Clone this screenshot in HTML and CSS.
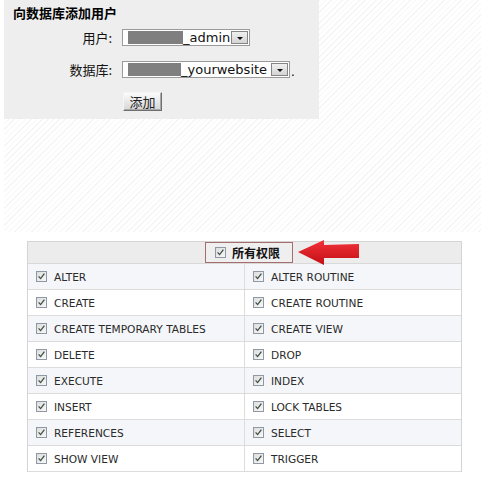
FILE: index.html
```html
<!DOCTYPE html>
<html lang="zh-CN">
<head>
<meta charset="utf-8">
<title>向数据库添加用户</title>
<link rel="stylesheet" href="styles.css">
</head>
<body>
<svg class="defs" width="0" height="0" aria-hidden="true">
  <defs>
    <linearGradient id="cbg" x1="0" y1="0" x2="1" y2="1">
      <stop offset="0" stop-color="#dcdcdc"/>
      <stop offset="1" stop-color="#f9f9f9"/>
    </linearGradient>
    <symbol id="cb" viewBox="0 0 11 11">
      <rect x="0.5" y="0.5" width="10" height="10" fill="url(#cbg)" stroke="#8e99a4"/>
      <path d="M2.6 5.4 L4.6 7.6 L8.4 2.6" fill="none" stroke="#3f4f45" stroke-width="1.3"/>
    </symbol>
    <linearGradient id="arr" x1="0" y1="0" x2="0" y2="1">
      <stop offset="0" stop-color="#f2333b"/>
      <stop offset="1" stop-color="#c30d14"/>
    </linearGradient>
  </defs>
</svg>

<div class="top">
  <div class="panel">
    <div class="title">向数据库添加用户</div>
    <div class="row row-user">
      <span class="label">用户:</span>
      <div class="select sel-user">
        <span class="redact redact-user"></span>
        <span class="val">_admin</span>
        <span class="drop"><span class="tri"></span></span>
      </div>
    </div>
    <div class="row row-db">
      <span class="label">数据库:</span>
      <div class="select sel-db">
        <span class="redact redact-db"></span>
        <span class="val">_yourwebsite</span>
        <span class="drop"><span class="tri"></span></span>
      </div>
      <span class="dot">.</span>
    </div>
    <div class="row row-btn">
      <button class="btn" type="button">添加</button>
    </div>
  </div>
</div>

<div class="perm">
  <div class="head">
    <span class="all"><svg class="cb"><use href="#cb"/></svg><b>所有权限</b></span>
  </div>
  <svg class="arrow" width="64" height="30" viewBox="0 0 64 30">
    <polygon points="1,14 27,2 27,7 62,6 62,20 27,20 27,27" fill="url(#arr)"/>
  </svg>
  <div class="grid">
    <div class="cell odd l"><svg class="cb"><use href="#cb"/></svg><span>ALTER</span></div>
    <div class="cell odd"><svg class="cb"><use href="#cb"/></svg><span>ALTER ROUTINE</span></div>
    <div class="cell l"><svg class="cb"><use href="#cb"/></svg><span>CREATE</span></div>
    <div class="cell"><svg class="cb"><use href="#cb"/></svg><span>CREATE ROUTINE</span></div>
    <div class="cell odd l"><svg class="cb"><use href="#cb"/></svg><span>CREATE TEMPORARY TABLES</span></div>
    <div class="cell odd"><svg class="cb"><use href="#cb"/></svg><span>CREATE VIEW</span></div>
    <div class="cell l"><svg class="cb"><use href="#cb"/></svg><span>DELETE</span></div>
    <div class="cell"><svg class="cb"><use href="#cb"/></svg><span>DROP</span></div>
    <div class="cell odd l"><svg class="cb"><use href="#cb"/></svg><span>EXECUTE</span></div>
    <div class="cell odd"><svg class="cb"><use href="#cb"/></svg><span>INDEX</span></div>
    <div class="cell l"><svg class="cb"><use href="#cb"/></svg><span>INSERT</span></div>
    <div class="cell"><svg class="cb"><use href="#cb"/></svg><span>LOCK TABLES</span></div>
    <div class="cell odd l"><svg class="cb"><use href="#cb"/></svg><span>REFERENCES</span></div>
    <div class="cell odd"><svg class="cb"><use href="#cb"/></svg><span>SELECT</span></div>
    <div class="cell l last"><svg class="cb"><use href="#cb"/></svg><span>SHOW VIEW</span></div>
    <div class="cell last"><svg class="cb"><use href="#cb"/></svg><span>TRIGGER</span></div>
  </div>
</div>
</body>
</html>
```

FILE: styles.css
```css
html, body {
  margin: 0;
  padding: 0;
  background: #ffffff;
}
body {
  font-family: "DejaVu Sans", "Noto Sans CJK SC", sans-serif;
  color: #000;
}
.defs {
  position: absolute;
  width: 0;
  height: 0;
}

.top {
  margin-left: 4px;
  width: 477px;
  height: 232px;
  background: repeating-linear-gradient(135deg, #ffffff 0 3px, #f5f5f5 3px 4px);
}
.panel {
  width: 315px;
  height: 119px;
  background: #eeeeee;
  box-sizing: border-box;
  padding-top: 5px;
}
.title {
  font-family: "Noto Sans CJK SC", sans-serif;
  font-weight: bold;
  font-size: 13px;
  line-height: 16px;
  height: 16px;
  padding-left: 9px;
}
.row {
  display: flex;
  align-items: center;
  gap: 10px;
}
.row-user { margin-top: 8px; }
.row-db { margin-top: 15px; }
.row-btn { margin-top: 14px; padding-left: 119px; }
.label {
  width: 108px;
  text-align: right;
  font-family: "Noto Sans CJK SC", sans-serif;
  font-size: 13px;
  line-height: 17px;
  color: #111;
}
.select {
  display: flex;
  align-items: center;
  height: 17px;
  box-sizing: border-box;
  border: 1px solid #9a9a9a;
  background: #ffffff;
  padding: 1px;
}
.sel-user { width: 128px; }
.sel-db { width: 168px; }
.redact {
  display: block;
  height: 13px;
  background: #7f7f7f;
  margin-left: 4px;
}
.redact-user { width: 55px; }
.redact-db { width: 53px; }
.val {
  font-size: 13px;
  line-height: 13px;
  color: #111;
}
.drop {
  margin-left: auto;
  width: 17px;
  height: 13px;
  box-sizing: border-box;
  border: 1px solid #858585;
  background: linear-gradient(#f0f0f0, #d4d4d4);
  display: flex;
  align-items: center;
  justify-content: center;
}
.tri {
  width: 0;
  height: 0;
  border-left: 3px solid transparent;
  border-right: 3px solid transparent;
  border-top: 3px solid #111;
  margin-top: 1px;
}
.dot {
  margin-left: -9px;
  font-size: 12px;
  line-height: 12px;
  align-self: flex-end;
}
.btn {
  width: 39px;
  height: 19px;
  padding: 0;
  margin: 0;
  font-family: "Noto Sans CJK SC", sans-serif;
  font-size: 13px;
  line-height: 15px;
  color: #222;
  background: linear-gradient(#fbfbfb, #d6d6d6);
  border: 1px solid;
  border-color: #f4f4f4 #6e6e6e #6e6e6e #f4f4f4;
  box-shadow: inset -1px -1px 0 #a9a9a9;
}

.perm {
  position: relative;
  margin: 9px 0 0 27px;
  width: 435px;
  border: 1px solid #d4d4d4;
  border-bottom: 0;
  box-sizing: border-box;
  color: #2a2a2a;
}
.head {
  height: 22px;
  background: #ececec;
  border-bottom: 1px solid #d9d9d9;
  box-sizing: border-box;
  display: flex;
  align-items: stretch;
}
.all {
  margin-left: 177px;
  width: 88px;
  box-sizing: border-box;
  border: 1px solid #a56d6d;
  background: #efefef;
  display: flex;
  align-items: center;
  padding-left: 9px;
  gap: 6px;
  font-family: "Noto Sans CJK SC", sans-serif;
  font-size: 12px;
  color: #111;
}
.all b { font-weight: bold; }
.arrow {
  position: absolute;
  left: 269px;
  top: -4px;
}
.cb {
  width: 11px;
  height: 11px;
  flex: none;
}
.grid {
  display: grid;
  grid-template-columns: 217px 1fr;
}
.cell {
  height: 26px;
  box-sizing: border-box;
  border-bottom: 1px solid #dcdcdc;
  display: flex;
  align-items: center;
  gap: 7px;
  padding-left: 8px;
  font-size: 10.6px;
  background: #ffffff;
}
.cell.odd { background: #f4f6f9; }
.cell.l { border-right: 1px solid #dcdcdc; }
.cell span { line-height: 12px; padding-top: 1px; }
```
